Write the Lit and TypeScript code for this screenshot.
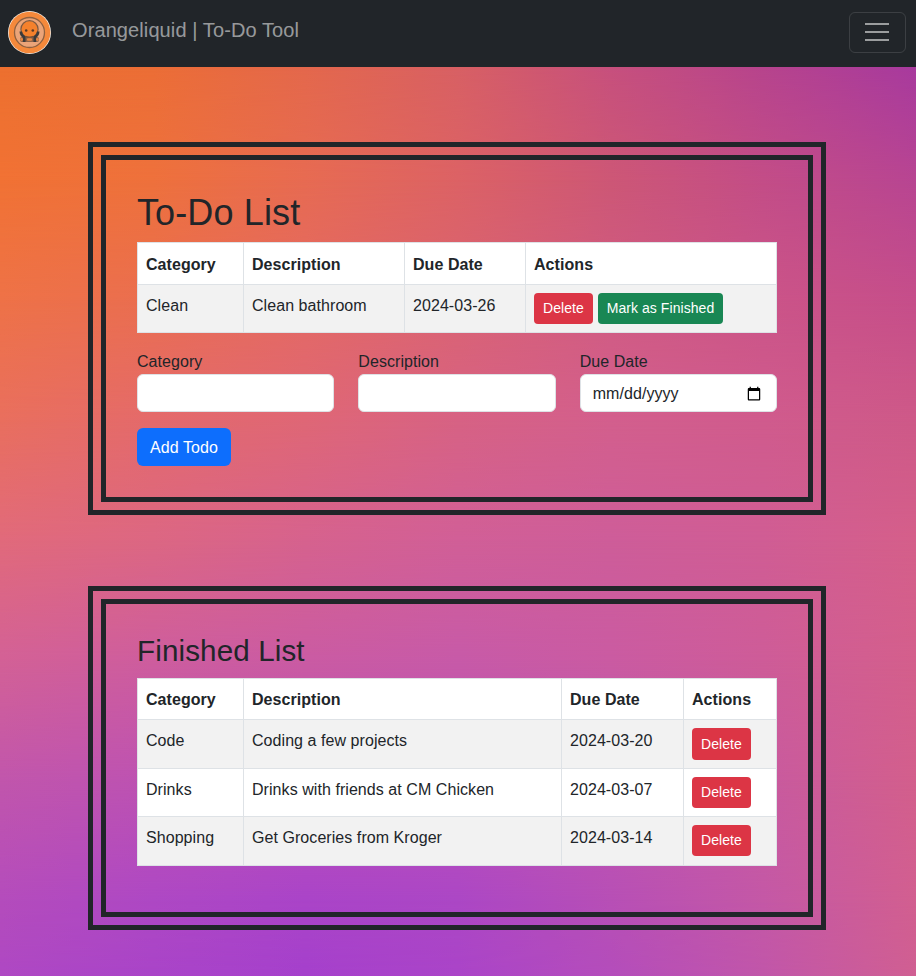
import { LitElement, html, css, svg } from "lit";
import { customElement } from "lit/decorators.js";
import { styleMap } from "lit/directives/style-map.js";

interface Todo {
  category: string;
  description: string;
  due: string;
}

const OPEN: Todo[] = [
  { category: "Clean", description: "Clean bathroom", due: "2024-03-26" },
];

const FINISHED: Todo[] = [
  { category: "Code", description: "Coding a few projects", due: "2024-03-20" },
  { category: "Drinks", description: "Drinks with friends at CM Chicken", due: "2024-03-07" },
  { category: "Shopping", description: "Get Groceries from Kroger", due: "2024-03-14" },
];

// Backdrop colour mesh: each row is [y, colours spread evenly from left to right].
const MESH: [number, string[]][] = [
  [67, ["#ed702f", "#ec6e36", "#e4684c", "#d86064", "#c7507d", "#b7448d", "#a83a9e"]],
  [180, ["#f17234", "#ee713c", "#e76b52", "#dc6265", "#cd5776", "#c34d87", "#b84592"]],
  [300, ["#ee7247", "#ea6e50", "#e46963", "#da6372", "#d05b82", "#cb5488", "#c64e8a"]],
  [420, ["#e96f5e", "#e46a6b", "#df6776", "#d76284", "#d35f8d", "#d05b8d", "#ce5988"]],
  [540, ["#e16a7b", "#dc6783", "#d6628e", "#d15f97", "#ce5d99", "#d05d94", "#d55f8a"]],
  [660, ["#d36196", "#ce5d9e", "#ca5ba3", "#c75aa8", "#ca5ba2", "#ce5c98", "#d45f8c"]],
  [780, ["#c156ac", "#bd52b2", "#bb50b7", "#ba50b7", "#c056ae", "#c85a9f", "#d35f8c"]],
  [900, ["#b44cbc", "#ae48c4", "#aa44c8", "#ac47c5", "#b74fb6", "#c458a6", "#d25f90"]],
  [976, ["#ae48c3", "#a944c8", "#a540cc", "#aa44c8", "#b44dbb", "#c156a9", "#d05f92"]],
];

@customElement("mesh-backdrop")
export class MeshBackdrop extends LitElement {
  static styles = css`
    :host { display: block; position: absolute; inset: 0; z-index: -1; overflow: hidden; }
    .layer { position: absolute; inset: 0; }
  `;

  render() {
    return MESH.map(([y, colors], i) => {
      const mask = i
        ? `linear-gradient(to bottom, transparent ${MESH[i - 1][0]}px, #000 ${y}px)`
        : "none";
      return html`<div class="layer" style=${styleMap({
        background: `linear-gradient(to right, ${colors.join(", ")})`,
        maskImage: mask,
      })}></div>`;
    });
  }
}

const logo = svg`
  <circle cx="21.500" cy="21.500" r="21.500" fill="#f7f1ea"/>
  <circle cx="21.500" cy="21.500" r="20.800" fill="#f5893b"/>
  <circle cx="21.500" cy="21.500" r="15" fill="#eba478" stroke="#8f6140" stroke-width="1.300"/>
  <rect x="12" y="26" width="19" height="5" rx="2" fill="#8d6349"/>
  <circle cx="21.500" cy="18.300" r="8.600" fill="#f5812c" stroke="#7d5a42" stroke-width="1.200"/>
  <path d="M12.800 20.500q.2 4 3.400 5.500v5M30.200 20.500q-.2 4-3.400 5.500v5" fill="none" stroke="#3b3a3a" stroke-width="2.600"/>
  <path d="M17.500 25.300q4 1.500 8 0" fill="none" stroke="#7a4f35" stroke-width="1.200"/>
  <circle cx="18.200" cy="19.500" r="1.300" fill="#5a3a26"/>
  <circle cx="24.800" cy="19.500" r="1.300" fill="#5a3a26"/>
  <circle cx="13.600" cy="28.500" r="1.400" fill="#e88843"/>
  <rect x="19" y="27.200" width="5" height="2.600" rx="1" fill="#e88843"/>
  <circle cx="29.400" cy="28.500" r="1.400" fill="#e88843"/>
`;

@customElement("app-root")
export class AppRoot extends LitElement {
  static styles = css`
    :host {
      display: block;
      position: relative;
      isolation: isolate;
      height: 976px;
      overflow: hidden;
      font: 16px/24px "Liberation Sans", Arial, sans-serif;
      letter-spacing: 0.06px;
      color: #212529;
    }
    * { box-sizing: border-box; }
    .navbar {
      display: flex;
      align-items: flex-start;
      height: 67px;
      padding: 11px 10px 0 8px;
      background: #212529;
    }
    .logo { display: block; width: 43px; height: 43px; }
    .brand {
      margin-left: 21px;
      padding-top: 4px;
      font-size: 20px;
      line-height: 30px;
      letter-spacing: 0.1px;
      color: rgba(255, 255, 255, 0.55);
    }
    .toggler {
      display: flex;
      justify-content: center;
      width: 57px;
      height: 41px;
      margin: 1px 0 0 auto;
      padding: 10px 1px 0 0;
      background: none;
      border: 1px solid rgba(255, 255, 255, 0.12);
      border-radius: 6px;
    }
    .toggler svg { display: block; width: 24px; height: 18px; }
    main {
      display: flex;
      flex-direction: column;
      gap: 97px;
      width: 712px;
      margin: 88px 0 0 101px;
    }
    .panel {
      border: 5px solid #212529;
      outline: 5px solid #212529;
      outline-offset: 8px;
      padding: 31px;
    }
    .panel.finished { padding: 30px 31px 46px; }
    h1, h2 { margin: 0 0 8px; font-weight: 400; letter-spacing: 0.12px; }
    h1 { font-size: 36px; line-height: 43px; }
    h2 { margin-bottom: 10px; font-size: 29.6px; line-height: 34px; }
    table {
      width: 640px;
      table-layout: fixed;
      border-collapse: separate;
      border-spacing: 0;
      border: solid #dee2e6;
      border-width: 1px 0 0 1px;
      background: #fff;
    }
    th, td {
      padding: 9px 0 0 8px;
      border: solid #dee2e6;
      border-width: 0 1px 1px 0;
      text-align: left;
      vertical-align: top;
    }
    td:last-child { padding-top: 8px; }
    th { height: 41px; }
    td { height: 48px; }
    tbody tr:nth-child(odd) td { background: #f2f2f2; }
    .open th { height: 42px; padding-top: 10px; }
    .finished tbody tr:nth-child(odd) td { height: 49px; }
    .cat { width: 106px; }
    .open .desc { width: 161px; }
    .open .due { width: 121px; }
    .open .act { width: 251px; }
    .finished .desc { width: 318px; }
    .finished .due { width: 122px; }
    .finished .act { width: 93px; }
    .actions { display: flex; gap: 5px; }
    button { font-family: inherit; letter-spacing: inherit; }
    .btn {
      border: 0;
      border-radius: 6px;
      padding: 0;
      color: #fff;
      font-size: 16px;
      line-height: 24px;
    }
    .small { height: 31px; border-radius: 4px; font-size: 14px; line-height: 21px; }
    .delete { width: 59px; background: #dc3545; }
    .finish { width: 125px; background: #198754; }
    .add { width: 94px; height: 38px; margin-top: 16px; padding-top: 1px; background: #0d6efd; display: block; }
    .finished tbody tr:first-child .delete { height: 32px; }
    .fields {
      display: grid;
      grid-template-columns: repeat(3, 1fr);
      gap: 24px;
      margin-top: 16px;
    }
    label { display: block; }
    .caption { display: block; height: 25px; padding-top: 1px; }
    input {
      display: block;
      width: 100%;
      height: 38px;
      padding: 7px 12px 6px;
      border: 1px solid #dee2e6;
      border-radius: 6px;
      background: #fff;
      color: #212529;
      font: inherit;
      letter-spacing: inherit;
    }
    input::-webkit-datetime-edit-month-field,
    input::-webkit-datetime-edit-day-field,
    input::-webkit-datetime-edit-year-field { padding: 0; }
  `;

  private head() {
    return html`<thead><tr>
      <th class="cat">Category</th><th class="desc">Description</th>
      <th class="due">Due Date</th><th class="act">Actions</th>
    </tr></thead>`;
  }

  private row(todo: Todo, open: boolean) {
    return html`<tr>
      <td>${todo.category}</td><td>${todo.description}</td><td>${todo.due}</td>
      <td><div class="actions">
        <button class="btn small delete">Delete</button>
        ${open ? html`<button class="btn small finish">Mark as Finished</button>` : ""}
      </div></td>
    </tr>`;
  }

  render() {
    return html`
      <mesh-backdrop></mesh-backdrop>
      <nav class="navbar">
        <svg class="logo" viewBox="0 0 43 43">${logo}</svg>
        <span class="brand">Orangeliquid | To-Do Tool</span>
        <button class="toggler" aria-label="Toggle navigation">
          <svg viewBox="0 0 24 18" fill="#9b9d9e">
            <rect width="24" height="2"/><rect y="8" width="24" height="2"/><rect y="16" width="24" height="2"/>
          </svg>
        </button>
      </nav>
      <main>
        <section class="panel open">
          <h1>To-Do List</h1>
          <table>${this.head()}<tbody>${OPEN.map((t) => this.row(t, true))}</tbody></table>
          <div class="fields">
            <label><span class="caption">Category</span><input type="text"></label>
            <label><span class="caption">Description</span><input type="text"></label>
            <label><span class="caption">Due Date</span><input type="date"></label>
          </div>
          <button class="btn add">Add Todo</button>
        </section>
        <section class="panel finished">
          <h2>Finished List</h2>
          <table>${this.head()}<tbody>${FINISHED.map((t) => this.row(t, false))}</tbody></table>
        </section>
      </main>
    `;
  }
}
